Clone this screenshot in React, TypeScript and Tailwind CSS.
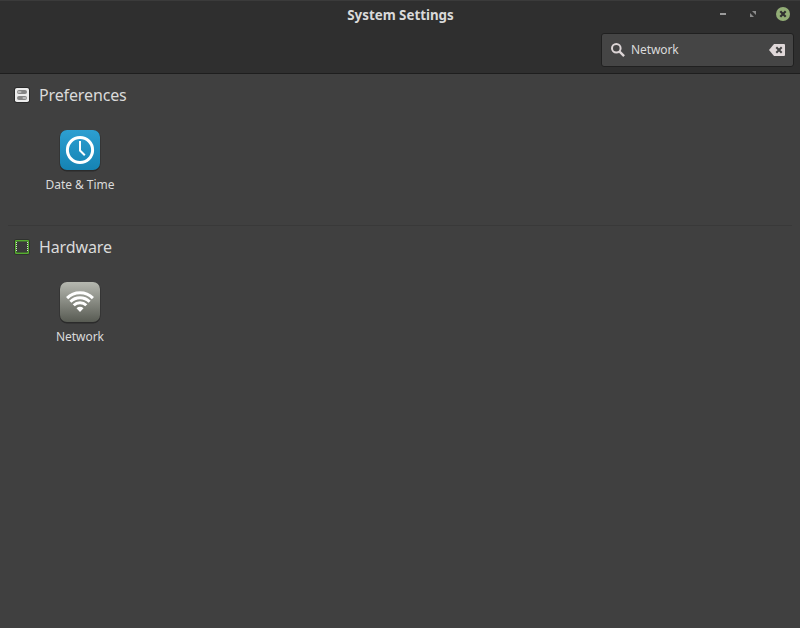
import type { ReactNode } from "react";

function PreferencesIcon() {
  return (
    <svg width="16" height="16" viewBox="0 0 16 16" className="shrink-0">
      <rect x="0.2" y="0.2" width="15.6" height="15.6" rx="2.4" fill="#242424" />
      <rect x="1" y="1" width="14" height="14" rx="1.8" fill="#ececec" />
      <rect x="3" y="3" width="10" height="4" rx="2" fill="#858585" />
      <rect x="3.5" y="4" width="4" height="2" rx="1" fill="#b9b9b9" />
      <rect x="3" y="9" width="10" height="4" rx="2" fill="#858585" />
      <rect x="8.5" y="10" width="4" height="2" rx="1" fill="#b9b9b9" />
    </svg>
  );
}

function HardwareIcon() {
  return (
    <svg width="16" height="16" viewBox="0 0 16 16" className="shrink-0">
      <rect x="0.2" y="0.2" width="15.6" height="15.6" rx="2" fill="#2a2e28" />
      <rect x="1" y="1" width="14" height="14" rx="1.2" fill="#56ad30" />
      <rect x="2" y="2.6" width="12" height="10.8" fill="#3c5a30" />
      <rect x="3" y="2.6" width="10" height="10.8" fill="#3a3a3a" />
      <path d="M2.5 3v10M13.5 3v10" stroke="#d6ded1" strokeDasharray="1 1" />
    </svg>
  );
}

function ClockIcon() {
  return (
    <svg width="44" height="44" viewBox="0 0 44 44">
      <defs>
        <linearGradient id="clock" x1="0" y1="0" x2="0" y2="1">
          <stop stopColor="#2d9fd1" />
          <stop offset="1" stopColor="#1583b3" />
        </linearGradient>
      </defs>
      <rect x="1.5" y="2" width="41" height="41.5" rx="7.5" fill="#202020" opacity=".65" />
      <rect x="2" y="2" width="40" height="40" rx="7" fill="url(#clock)" />
      <circle cx="22" cy="22" r="12.6" fill="none" stroke="#fff" strokeWidth="3" />
      <path d="M22 13v9.5l4.8 4.8" fill="none" stroke="#fff" strokeWidth="2" />
    </svg>
  );
}

function WifiIcon() {
  return (
    <svg width="44" height="44" viewBox="0 0 44 44">
      <defs>
        <linearGradient id="wifi" x1="0" y1="0" x2="0" y2="1">
          <stop stopColor="#b6b8b0" />
          <stop offset="1" stopColor="#585b53" />
        </linearGradient>
      </defs>
      <rect x="1.5" y="2" width="41" height="41.5" rx="7.5" fill="#202020" opacity=".65" />
      <rect x="2" y="2" width="40" height="40" rx="7" fill="url(#wifi)" />
      <g fill="none" stroke="#fff" strokeWidth="3">
        <path d="M9.1 18.1a18.2 18.2 0 0 1 25.8 0" />
        <path d="M12.4 21.8a13.5 13.5 0 0 1 19.2 0" />
        <path d="M15.7 25.3a9 9 0 0 1 12.6 0" />
      </g>
      <path d="M22 32l-3.5-3.8a5 5 0 0 1 7 0z" fill="#fff" />
    </svg>
  );
}

function Section({ icon, title, children }: { icon: ReactNode; title: string; children: ReactNode }) {
  return (
    <section className="h-[152px] px-[14px] pt-[9px]">
      <h2 className="flex h-6 items-center gap-[9px] text-[16px] leading-6 font-normal tracking-[-0.13px]">
        {icon}
        {title}
      </h2>
      {children}
    </section>
  );
}

function Launcher({ icon, label }: { icon: ReactNode; label: string }) {
  return (
    <button className="mt-[21px] flex w-[132px] flex-col items-center text-[12px] leading-4 tracking-[-0.05px]">
      {icon}
      <span className="mt-[5px]">{label}</span>
    </button>
  );
}

export default function App() {
  return (
    <main className="flex h-[628px] w-[800px] flex-col overflow-hidden bg-[#404040] font-['Noto_Sans',sans-serif] text-[#dadada]">
      <header className="flex h-[74px] flex-col border-t border-b border-t-[#3b3b3b] border-b-[#1e1e1e] bg-[#2f2f2f]">
        <div className="grid h-[26px] grid-cols-[1fr_auto_1fr] items-center">
          <span />
          <h1 className="pt-[2px] pl-px text-[13.33px] leading-6 font-bold">System Settings</h1>
          <div className="flex items-center justify-end pr-[10px]">
            <svg width="72" height="16" viewBox="0 0 72 16">
              <path d="M2 7h6v2H2z" fill="#9b9b9b" />
              <path d="M34 5h4v4zM32 7v4h4z" fill="#8b8b8b" />
              <circle cx="65" cy="8" r="7" fill="#92ad76" />
              <path d="M62.3 5.3l5.4 5.4m0-5.4l-5.4 5.4" stroke="#2f2f2f" strokeWidth="2.2" />
            </svg>
          </div>
        </div>
        <div className="mt-[6px] mr-[6px] flex h-[34px] w-[193px] items-center self-end rounded-[3px] border border-[#202020] bg-[#454545] pr-[8px] pl-[9px]">
          <svg width="15" height="16" viewBox="0 0 15 16" fill="none" stroke="#ddd5d6">
            <circle cx="5.3" cy="6.3" r="4.3" strokeWidth="2" />
            <path d="M8.6 9.6l4.5 4.5" strokeWidth="2.4" />
          </svg>
          <span className="ml-[5px] text-[12px] leading-4 tracking-[-0.1px]">Network</span>
          <svg width="16" height="12" viewBox="0 0 16 12" className="ml-auto">
            <path d="M0 6l5-6h10q1 0 1 1v10q0 1-1 1H5z" fill="#e0d8d9" />
            <path d="M7.3 3.3l5.4 5.4m0-5.4l-5.4 5.4" stroke="#454545" strokeWidth="2" />
          </svg>
        </div>
      </header>
      <Section icon={<PreferencesIcon />} title="Preferences">
        <Launcher icon={<ClockIcon />} label="Date & Time" />
      </Section>
      <div className="-mt-px mx-2 h-px bg-[#393939]" />
      <Section icon={<HardwareIcon />} title="Hardware">
        <Launcher icon={<WifiIcon />} label="Network" />
      </Section>
    </main>
  );
}
